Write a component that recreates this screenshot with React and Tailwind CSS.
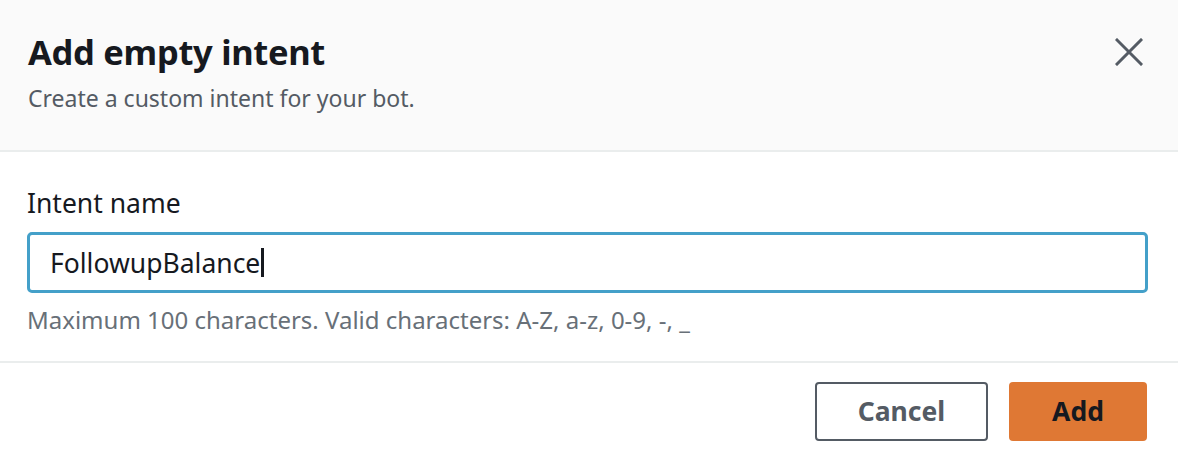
const font = { fontFamily: '"Noto Sans", "Open Sans", Arial, sans-serif' };

export default function App() {
  return (
    <div className="w-[1178px] h-[456px] bg-white overflow-hidden" style={font}>
      <div className="h-[152px] bg-[#fafafa] border-b-2 border-[#eaeded] flex items-start justify-between pl-[28px] pr-[35px]">
        <div className="pt-[30px]">
          <h1 className="text-[34.5px] leading-[44px] font-bold text-[#16191f] tracking-[-0.3px]">Add empty intent</h1>
          <p className="mt-[9px] text-[23px] leading-[30px] text-[#545b64]">Create a custom intent for your bot.</p>
        </div>
        <button className="mt-[38px] text-[#545b64]">
          <svg width="28" height="28" viewBox="0 0 28 28" fill="none" stroke="currentColor" strokeWidth="3" strokeLinecap="square">
            <path d="M2 2L26 26M26 2L2 26" />
          </svg>
        </button>
      </div>

      <div className="pl-[27px] pr-[30px] pt-[34px] pb-[26px] border-b-2 border-[#eaeded]">
        <label className="block text-[26.5px] leading-[34px] text-[#16191f]">Intent name</label>
        <div className="mt-[12px] h-[61px] rounded-[5px] border-[3px] border-[#44a0c9] flex items-center pl-[20px]">
          <span className="text-[26.5px] leading-[34px] text-[#16191f]">FollowupBalance</span>
          <span className="w-[3px] h-[29px] bg-[#16191f] ml-[1px]" />
        </div>
        <p className="mt-[12px] text-[24px] leading-[30px] text-[#687078]">
          Maximum 100 characters. Valid characters: A-Z, a-z, 0-9, -, _
        </p>
      </div>

      <div className="flex justify-end gap-[21px] pt-[19px] pr-[31px]">
        <button className="w-[173px] h-[59px] rounded-[4px] border-2 border-[#545b64] text-[26.5px] font-bold text-[#545b64]">
          Cancel
        </button>
        <button className="w-[138px] h-[59px] rounded-[4px] bg-[#df7834] text-[26.5px] font-bold text-[#16191f]">
          Add
        </button>
      </div>
    </div>
  );
}
